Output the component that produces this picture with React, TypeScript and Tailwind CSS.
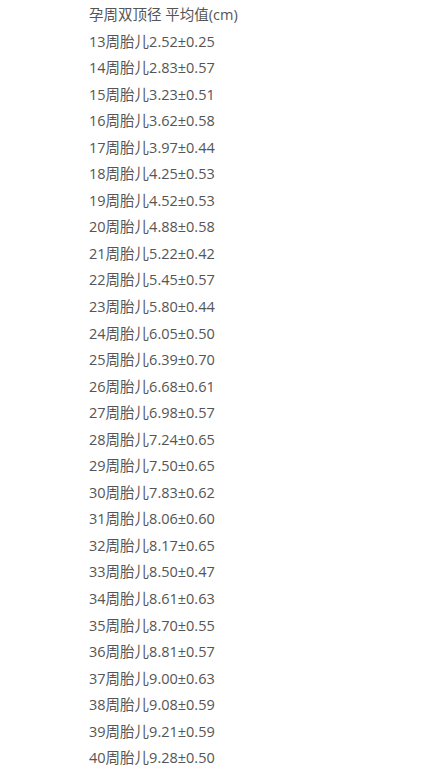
const rows: [number, string][] = [
  [13, "2.52±0.25"],
  [14, "2.83±0.57"],
  [15, "3.23±0.51"],
  [16, "3.62±0.58"],
  [17, "3.97±0.44"],
  [18, "4.25±0.53"],
  [19, "4.52±0.53"],
  [20, "4.88±0.58"],
  [21, "5.22±0.42"],
  [22, "5.45±0.57"],
  [23, "5.80±0.44"],
  [24, "6.05±0.50"],
  [25, "6.39±0.70"],
  [26, "6.68±0.61"],
  [27, "6.98±0.57"],
  [28, "7.24±0.65"],
  [29, "7.50±0.65"],
  [30, "7.83±0.62"],
  [31, "8.06±0.60"],
  [32, "8.17±0.65"],
  [33, "8.50±0.47"],
  [34, "8.61±0.63"],
  [35, "8.70±0.55"],
  [36, "8.81±0.57"],
  [37, "9.00±0.63"],
  [38, "9.08±0.59"],
  [39, "9.21±0.59"],
  [40, "9.28±0.50"],
];

export default function App() {
  return (
    <div className="min-h-[769px] w-[445px] bg-white pt-[2px] pl-[89px] font-['Open_Sans','Noto_Sans_CJK_SC',sans-serif] text-[14.5px] leading-[26.55px] text-[#555]">
      <p>孕周双顶径 平均值(cm)</p>
      {rows.map(([week, value]) => (
        <p key={week}>
          {week}周胎儿{value}
        </p>
      ))}
    </div>
  );
}
